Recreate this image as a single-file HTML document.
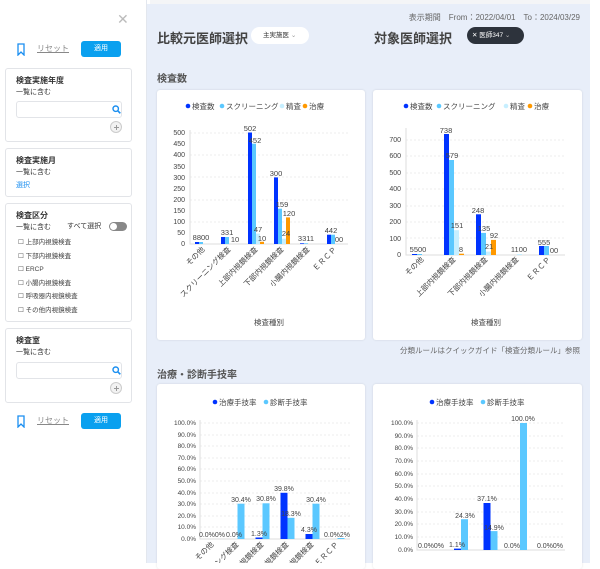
<!DOCTYPE html><html><head><meta charset="utf-8"><style>
*{box-sizing:border-box;margin:0;padding:0}
body{width:600px;height:563px;overflow:hidden;background:#fff;font-family:"Liberation Sans","Noto Sans CJK JP",sans-serif;color:#333;position:relative}
.a{position:absolute}
.side{left:0;top:0;width:147px;height:563px;background:#fff;border-right:1px solid #e3e7ee}
.main{left:147px;top:4px;width:443px;height:559px;background:#e8eef9}
.box{position:absolute;left:5px;width:127px;background:#fff;border:1px solid #e2e4e8;border-radius:3px}
.box b{position:absolute;left:10px;top:6px;font-size:8px;font-weight:bold}
.box i{position:absolute;left:10px;top:18px;font-size:7px;font-style:normal}
.inp{position:absolute;left:10px;width:106px;height:17px;border:1px solid #e2e4e8;border-radius:3px}
.btn{position:absolute;width:40px;height:16px;background:#0aa0ef;border-radius:3px;color:#fff;font-size:7px;text-align:center;line-height:16px}
.card{position:absolute;background:#fff;border-radius:3px;box-shadow:0 0 2px rgba(0,0,0,.12)}
svg text{font-family:"Liberation Sans","Noto Sans CJK JP",sans-serif}
.plus{position:absolute;left:104px;width:12px;height:12px;border:1px solid #ccc;border-radius:50%;background:#f2f2f2}
.plus:before{content:"";position:absolute;left:2.5px;top:4.5px;width:5px;height:1px;background:#999}
.plus:after{content:"";position:absolute;left:4.5px;top:2.5px;width:1px;height:5px;background:#999}
</style></head><body>
<div class="a side">
<div class="a" style="left:117px;top:11px;font-size:14px;color:#bbb">✕</div>
<svg class="a" style="left:16px;top:43px" width="10" height="13"><path d="M2 1h6v11l-3-3-3 3z" fill="none" stroke="#1a8ef0" stroke-width="1.3"/></svg>
<div class="a" style="left:37px;top:43px;font-size:8px;color:#888;text-decoration:underline">リセット</div>
<div class="btn" style="left:81px;top:41px">適用</div>
<div class="box" style="top:68px;height:74px"><b>検査実施年度</b><i>一覧に含む</i><div class="inp" style="top:32px"></div><svg class="a" style="left:106px;top:36px" width="9" height="9"><circle cx="3.7" cy="3.7" r="2.7" fill="none" stroke="#1a8ef0" stroke-width="1.4"/><path d="M5.7 5.7L8.3 8.3" stroke="#1a8ef0" stroke-width="1.6"/></svg><div class="plus" style="top:52px"></div></div>
<div class="box" style="top:148px;height:49px"><b>検査実施月</b><i>一覧に含む</i><div class="a" style="left:10px;top:31px;font-size:7px;color:#1a8ef0">選択</div></div>
<div class="box" style="top:203px;height:119px"><b>検査区分</b><i>一覧に含む</i><div class="a" style="left:61px;top:17px;font-size:7px">すべて選択</div><div class="a" style="left:103px;top:18px;width:18px;height:9px;border-radius:5px;background:#888"><div class="a" style="left:1px;top:1px;width:7px;height:7px;border-radius:50%;background:#fff"></div></div>
<div class="a" style="left:12px;top:32px;font-size:6.5px;line-height:13.5px;color:#444">
<div>☐ 上部内視鏡検査</div><div>☐ 下部内視鏡検査</div><div>☐ ERCP</div><div>☐ 小腸内視鏡検査</div><div>☐ 呼吸器内視鏡検査</div><div>☐ その他内視鏡検査</div></div></div>
<div class="box" style="top:328px;height:75px"><b>検査室</b><i>一覧に含む</i><div class="inp" style="top:33px"></div><svg class="a" style="left:106px;top:37px" width="9" height="9"><circle cx="3.7" cy="3.7" r="2.7" fill="none" stroke="#1a8ef0" stroke-width="1.4"/><path d="M5.7 5.7L8.3 8.3" stroke="#1a8ef0" stroke-width="1.6"/></svg><div class="plus" style="top:53px"></div></div>
<svg class="a" style="left:16px;top:415px" width="10" height="13"><path d="M2 1h6v11l-3-3-3 3z" fill="none" stroke="#1a8ef0" stroke-width="1.3"/></svg>
<div class="a" style="left:37px;top:415px;font-size:8px;color:#888;text-decoration:underline">リセット</div>
<div class="btn" style="left:81px;top:413px">適用</div>
</div>
<div class="a main"></div>
<div class="a" style="left:590px;top:0;width:10px;height:563px;background:#fff"></div>
<div class="a" style="left:150px;top:0;width:440px;height:4px;background:#f4f5f7"></div>
<div class="a" style="left:380px;top:12px;width:200px;text-align:right;font-size:8px;color:#666">表示期間　From：2022/04/01　To：2024/03/29</div>
<div class="a" style="left:157px;top:28px;font-size:13px;font-weight:bold;color:#444">比較元医師選択</div>
<div class="a" style="left:251px;top:27px;width:58px;height:17px;background:#fff;border-radius:9px;font-size:6.5px;line-height:17px;padding-left:12px">主実施医 <span style="color:#999">⌄</span></div>
<div class="a" style="left:374px;top:28px;font-size:13px;font-weight:bold;color:#444">対象医師選択</div>
<div class="a" style="left:467px;top:27px;width:57px;height:17px;background:#2d333c;border-radius:9px;font-size:6.5px;line-height:17px;padding-left:5px;color:#fff">✕ 医師347 <span style="color:#bbb">⌄</span></div>
<div class="a" style="left:157px;top:70px;font-size:10px;font-weight:bold;color:#555">検査数</div>
<div class="card" style="left:157px;top:90px;width:208px;height:250px"></div>
<div class="card" style="left:373px;top:90px;width:209px;height:250px"></div>
<div class="a" style="left:360px;top:345px;width:220px;text-align:right;font-size:7.5px;color:#666">分類ルールはクイックガイド「検査分類ルール」参照</div>
<div class="a" style="left:157px;top:366px;font-size:10px;font-weight:bold;color:#555">治療・診断手技率</div>
<div class="card" style="left:157px;top:384px;width:208px;height:185px"></div>
<div class="card" style="left:373px;top:384px;width:209px;height:185px"></div>

<svg class="a" style="left:0;top:0" width="600" height="563" font-size="7" fill="#444">
<g font-size="7.5"><circle cx="188" cy="106" r="2.3" fill="#0033ff"/><text x="192" y="109">検査数</text><circle cx="222" cy="106" r="2.3" fill="#5bc8ff"/><text x="226" y="109">スクリーニング</text><circle cx="282" cy="106" r="2.3" fill="#c7efff"/><text x="286" y="109">精査</text><circle cx="305" cy="106" r="2.3" fill="#ff9900"/><text x="309" y="109">治療</text></g>
<g stroke="#eee" stroke-dasharray="2,2"><path d="M190 133H348M190 155H348M190 177H348M190 200H348M190 222H348M190 155H348"/></g>
<path d="M190 130V244H348" stroke="#ddd" fill="none"/>
<g text-anchor="end"><text x="185" y="246">0</text><text x="185" y="235">50</text><text x="185" y="224">100</text><text x="185" y="213">150</text><text x="185" y="202">200</text><text x="185" y="191">250</text><text x="185" y="180">300</text><text x="185" y="169">350</text><text x="185" y="157">400</text><text x="185" y="146">450</text><text x="185" y="135">500</text></g>
<g fill="#0033ff"><rect x="195" y="242" width="4" height="2"/><rect x="221" y="237" width="4" height="7"/><rect x="248" y="132.5" width="4" height="111.5"/><rect x="274" y="177.4" width="4" height="66.6"/><rect x="300" y="243.3" width="4" height=".7"/><rect x="327" y="234.7" width="4" height="9.3"/></g>
<g fill="#5bc8ff"><rect x="199" y="242" width="4" height="2"/><rect x="225" y="237" width="4" height="7"/><rect x="252" y="143.7" width="4" height="100.3"/><rect x="278" y="208.7" width="4" height="35.3"/><rect x="304" y="243.3" width="4" height=".7"/><rect x="331" y="234.7" width="4" height="9.3"/></g>
<g fill="#c7efff"><rect x="256" y="233.6" width="4" height="10.4"/><rect x="282" y="238.7" width="4" height="5.3"/></g>
<g fill="#ff9900"><rect x="260" y="241.8" width="4" height="2.2"/><rect x="286" y="217.4" width="4" height="26.6"/></g>
<g text-anchor="middle" font-size="7.5"><text x="201" y="240">8800</text><text x="227" y="235">331</text><text x="235" y="242">10</text><text x="250" y="131">502</text><text x="255" y="143">452</text><text x="258" y="232">47</text><text x="262" y="241">10</text><text x="276" y="176">300</text><text x="282" y="207">159</text><text x="286" y="236">24</text><text x="289" y="216">120</text><text x="306" y="241">3311</text><text x="331" y="233">442</text><text x="339" y="242">00</text></g>
<g text-anchor="end" font-size="7.5"><text transform="translate(205,250) rotate(-45)">その他</text><text transform="translate(231,250) rotate(-45)">スクリーニング検査</text><text transform="translate(258,250) rotate(-45)">上部内視鏡検査</text><text transform="translate(284,250) rotate(-45)">下部内視鏡検査</text><text transform="translate(310,250) rotate(-45)">小腸内視鏡検査</text><text transform="translate(337,250) rotate(-45)">ＥＲＣＰ</text></g>
<text x="269" y="325" text-anchor="middle" font-size="7.5">検査種別</text>

<g font-size="7.5"><circle cx="406" cy="106" r="2.3" fill="#0033ff"/><text x="410" y="109">検査数</text><circle cx="439" cy="106" r="2.3" fill="#5bc8ff"/><text x="443" y="109">スクリーニング</text><circle cx="506" cy="106" r="2.3" fill="#c7efff"/><text x="510" y="109">精査</text><circle cx="530" cy="106" r="2.3" fill="#ff9900"/><text x="534" y="109">治療</text></g>
<g stroke="#eee" stroke-dasharray="2,2"><path d="M406 140H565M406 156H565M406 173H565M406 189H565M406 206H565M406 222H565M406 238H565"/></g>
<path d="M406 128V255H565" stroke="#ddd" fill="none"/>
<g text-anchor="end"><text x="401" y="257">0</text><text x="401" y="241">100</text><text x="401" y="224">200</text><text x="401" y="208">300</text><text x="401" y="191">400</text><text x="401" y="175">500</text><text x="401" y="158">600</text><text x="401" y="142">700</text></g>
<g fill="#0033ff"><rect x="412" y="254" width="5" height="1"/><rect x="444" y="134" width="5" height="121"/><rect x="476" y="214.3" width="5" height="40.7"/><rect x="539" y="246" width="5" height="9"/></g>
<g fill="#5bc8ff"><rect x="417" y="254" width="5" height="1"/><rect x="449" y="160" width="5" height="95"/><rect x="481" y="232.9" width="5" height="22.1"/><rect x="544" y="246" width="5" height="9"/></g>
<g fill="#c7efff"><rect x="454" y="230.2" width="5" height="24.8"/><rect x="486" y="251.6" width="5" height="3.4"/><rect x="517" y="254" width="5" height="1"/></g>
<g fill="#ff9900"><rect x="459" y="253.7" width="5" height="1.3"/><rect x="491" y="239.9" width="5" height="15.1"/></g>
<g text-anchor="middle" font-size="7.5"><text x="418" y="252">5500</text><text x="446" y="133">738</text><text x="452" y="158">579</text><text x="457" y="228">151</text><text x="461" y="252">8</text><text x="478" y="213">248</text><text x="484" y="231">135</text><text x="489" y="249">21</text><text x="494" y="238">92</text><text x="519" y="252">1100</text><text x="544" y="245">555</text><text x="554" y="253">00</text></g>
<g text-anchor="end" font-size="7.5"><text transform="translate(424,260) rotate(-45)">その他</text><text transform="translate(456,260) rotate(-45)">上部内視鏡検査</text><text transform="translate(488,260) rotate(-45)">下部内視鏡検査</text><text transform="translate(519,260) rotate(-45)">小腸内視鏡検査</text><text transform="translate(551,260) rotate(-45)">ＥＲＣＰ</text></g>
<text x="486" y="325" text-anchor="middle" font-size="7.5">検査種別</text>

<g font-size="7.5"><circle cx="215" cy="402" r="2.3" fill="#0033ff"/><text x="219" y="405">治療手技率</text><circle cx="266" cy="402" r="2.3" fill="#5bc8ff"/><text x="270" y="405">診断手技率</text></g>
<g stroke="#eee" stroke-dasharray="2,2"><path d="M200 423H350M200 435H350M200 446H350M200 458H350M200 469H350M200 481H350M200 493H350M200 504H350M200 516H350M200 527H350"/></g>
<path d="M200 420V539H350" stroke="#ddd" fill="none"/>
<g text-anchor="end" font-size="6.5"><text x="196" y="541">0.0%</text><text x="196" y="529">10.0%</text><text x="196" y="518">20.0%</text><text x="196" y="506">30.0%</text><text x="196" y="495">40.0%</text><text x="196" y="483">50.0%</text><text x="196" y="471">60.0%</text><text x="196" y="460">70.0%</text><text x="196" y="448">80.0%</text><text x="196" y="437">90.0%</text><text x="196" y="425">100.0%</text></g>
<g fill="#0033ff"><rect x="255.5" y="537.5" width="7" height="1.5"/><rect x="280.5" y="492.8" width="7" height="46.2"/><rect x="305.5" y="534" width="7" height="5"/></g>
<g fill="#5bc8ff"><rect x="237.5" y="503.7" width="7" height="35.3"/><rect x="262.5" y="503.3" width="7" height="35.7"/><rect x="287.5" y="517.8" width="7" height="21.2"/><rect x="312.5" y="503.7" width="7" height="35.3"/><rect x="337.5" y="538" width="7" height="1"/></g>
<g text-anchor="middle" font-size="7"><text x="212" y="537">0.0%0%</text><text x="234" y="537">0.0%</text><text x="241" y="502">30.4%</text><text x="259" y="536">1.3%</text><text x="266" y="501">30.8%</text><text x="284" y="491">39.8%</text><text x="291" y="516">18.3%</text><text x="309" y="532">4.3%</text><text x="316" y="502">30.4%</text><text x="337" y="537">0.0%2%</text></g>
<g text-anchor="end" font-size="7.5"><text transform="translate(214,545) rotate(-45)">その他</text><text transform="translate(239,545) rotate(-45)">スクリーニング検査</text><text transform="translate(264,545) rotate(-45)">上部内視鏡検査</text><text transform="translate(289,545) rotate(-45)">下部内視鏡検査</text><text transform="translate(314,545) rotate(-45)">小腸内視鏡検査</text><text transform="translate(339,545) rotate(-45)">ＥＲＣＰ</text></g>

<g font-size="7.5"><circle cx="432" cy="402" r="2.3" fill="#0033ff"/><text x="436" y="405">治療手技率</text><circle cx="483" cy="402" r="2.3" fill="#5bc8ff"/><text x="487" y="405">診断手技率</text></g>
<g stroke="#eee" stroke-dasharray="2,2"><path d="M417 423H565M417 436H565M417 448H565M417 461H565M417 474H565M417 486H565M417 499H565M417 512H565M417 524H565M417 537H565"/></g>
<path d="M417 420V550H565" stroke="#ddd" fill="none"/>
<g text-anchor="end" font-size="6.5"><text x="413" y="552">0.0%</text><text x="413" y="539">10.0%</text><text x="413" y="526">20.0%</text><text x="413" y="514">30.0%</text><text x="413" y="501">40.0%</text><text x="413" y="488">50.0%</text><text x="413" y="476">60.0%</text><text x="413" y="463">70.0%</text><text x="413" y="450">80.0%</text><text x="413" y="438">90.0%</text><text x="413" y="425">100.0%</text></g>
<g fill="#0033ff"><rect x="454" y="548.6" width="7" height="1.4"/><rect x="483.5" y="503" width="7" height="47"/></g>
<g fill="#5bc8ff"><rect x="461" y="519.2" width="7" height="30.8"/><rect x="490.5" y="531.1" width="7" height="18.9"/><rect x="520" y="423" width="7" height="127"/></g>
<g text-anchor="middle" font-size="7"><text x="431" y="548">0.0%0%</text><text x="457" y="547">1.1%</text><text x="465" y="518">24.3%</text><text x="487" y="501">37.1%</text><text x="494" y="530">14.9%</text><text x="512" y="548">0.0%</text><text x="523" y="421">100.0%</text><text x="550" y="548">0.0%0%</text></g>
</svg>
</body></html>
